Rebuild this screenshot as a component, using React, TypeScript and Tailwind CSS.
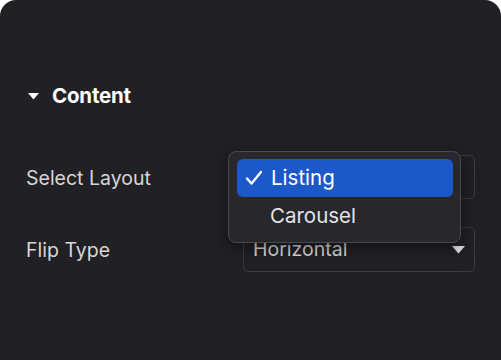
import React from "react";

export default function App() {
  return (
    <div className="w-[501px] h-[360px] bg-white" style={{ fontFamily: "Inter, Roboto, 'Liberation Sans', sans-serif" }}>
      <div className="relative w-full h-full bg-[#212024] rounded-t-[16px] pt-[84px]">
        <div className="flex items-center pl-[28px] h-[24px]">
          <svg width="11" height="7" viewBox="0 0 11 7" className="mr-[13px]">
            <path d="M0 0 L11 0 L5.5 6.5 Z" fill="#ffffff" />
          </svg>
          <span className="text-white font-bold text-[20.5px] tracking-[-0.2px]">Content</span>
        </div>
        <div className="mt-[47px] flex items-center pl-[26px] pr-[26px] h-[44px]">
          <span className="flex-1 text-[#d6d6d9] text-[19.5px] pt-[3px]">Select Layout</span>
          <div className="w-[232px] h-[44px] border border-[#3c3b41] rounded-[5px]" />
        </div>
        <div className="mt-[28px] flex items-center pl-[26px] pr-[26px] h-[45px]">
          <span className="flex-1 text-[#d6d6d9] text-[19.5px] pt-[2px]">Flip Type</span>
          <div className="w-[232px] h-[45px] border border-[#3c3b41] rounded-[5px] flex items-center pl-[9px] pr-[9px]">
            <span className="flex-1 text-[#d6d6d9] text-[19.5px]">Horizontal</span>
            <svg width="13" height="8" viewBox="0 0 13 8">
              <path d="M0 0 L13 0 L6.5 7.5 Z" fill="#e4e4e7" />
            </svg>
          </div>
        </div>
        <div className="absolute left-[228px] top-[151px] w-[233px] h-[92px] bg-[#28272c] border border-[#4a494f] rounded-[8px] shadow-[0_4px_16px_rgba(0,0,0,0.5)] p-[7px_7px_0_8px]">
          <div className="h-[38px] bg-[#1d58c9] rounded-[6px] flex items-center pl-[8px] text-white text-[20.5px]">
            <svg width="18" height="16" viewBox="0 0 18 16" className="mr-[8px]">
              <path d="M2 8.5 L6.5 13.5 L16 2" fill="none" stroke="#ffffff" strokeWidth="2.4" strokeLinecap="round" strokeLinejoin="round" />
            </svg>
            <span>Listing</span>
          </div>
          <div className="h-[38px] flex items-center pl-[33px] text-[#e4e4e7] text-[20.5px]">Carousel</div>
        </div>
      </div>
    </div>
  );
}
